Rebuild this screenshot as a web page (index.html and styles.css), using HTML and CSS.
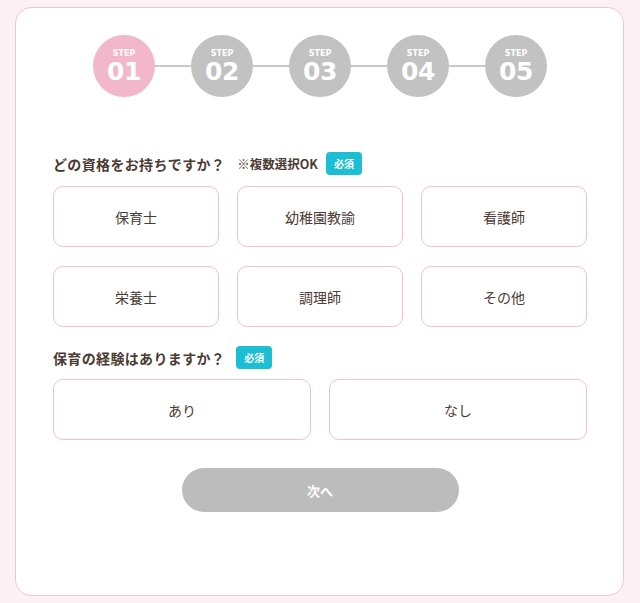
FILE: index.html
```html
<!DOCTYPE html>
<html lang="ja">
<head>
<meta charset="utf-8">
<title>STEP 01</title>
<link rel="stylesheet" href="styles.css">
</head>
<body>
<div class="card">
  <div class="steps">
    <div class="step active"><span class="step-label">STEP</span><span class="step-num">01</span></div>
    <div class="connector"></div>
    <div class="step"><span class="step-label">STEP</span><span class="step-num">02</span></div>
    <div class="connector"></div>
    <div class="step"><span class="step-label">STEP</span><span class="step-num">03</span></div>
    <div class="connector"></div>
    <div class="step"><span class="step-label">STEP</span><span class="step-num">04</span></div>
    <div class="connector"></div>
    <div class="step"><span class="step-label">STEP</span><span class="step-num">05</span></div>
  </div>

  <div class="question q1">
    <span class="q-title">どの資格をお持ちですか？</span>
    <span class="q-note">※複数選択OK</span>
    <span class="badge">必須</span>
  </div>
  <div class="options three">
    <button class="opt">保育士</button>
    <button class="opt">幼稚園教諭</button>
    <button class="opt">看護師</button>
    <button class="opt">栄養士</button>
    <button class="opt">調理師</button>
    <button class="opt">その他</button>
  </div>

  <div class="question q2">
    <span class="q-title">保育の経験はありますか？</span>
    <span class="badge">必須</span>
  </div>
  <div class="options two">
    <button class="opt">あり</button>
    <button class="opt">なし</button>
  </div>

  <div class="actions">
    <button class="next">次へ</button>
  </div>
</div>
</body>
</html>
```

FILE: styles.css
```css
* { box-sizing: border-box; }
html, body { margin: 0; padding: 0; }
body {
  background: #fef1f6;
  font-family: "Noto Sans CJK JP", "Noto Sans", sans-serif;
  color: #4b3b33;
  padding: 7px 16px 7px 15px;
}
.card {
  background: #ffffff;
  border: 1px solid #f6c3d4;
  border-radius: 16px;
  height: 589px;
  padding: 27px 36px 0 37px;
}
.steps {
  display: flex;
  justify-content: center;
  align-items: center;
}
.step {
  width: 62px;
  height: 62px;
  border-radius: 50%;
  background: #c2c2c2;
  color: #fff;
  display: flex;
  flex-direction: column;
  align-items: center;
  justify-content: center;
  gap: 1px;
  font-family: "DejaVu Sans", "Liberation Sans", sans-serif;
  font-weight: 700;
}
.step.active { background: #f2b7c9; }
.step-label {
  font-size: 8px;
  line-height: 1;
  margin-top: 2px;
}
.step-num {
  font-size: 25px;
  line-height: 1;
  letter-spacing: -0.5px;
}
.connector {
  width: 36px;
  height: 2px;
  background: #c9c9c9;
}
.question {
  display: flex;
  align-items: center;
  height: 23px;
}
.q1 { margin-top: 55px; }
.q2 { margin-top: 19px; }
.q-title {
  font-size: 14px;
  font-weight: 700;
  letter-spacing: 0.35px;
  color: #4b3b33;
}
.q-note {
  font-size: 12.5px;
  font-weight: 700;
  margin-left: 12px;
  color: #4b3b33;
}
.badge {
  background: #1bbed2;
  color: #fff;
  font-size: 10px;
  font-weight: 700;
  border-radius: 4px;
  height: 23px;
  line-height: 23px;
  padding: 0 8px;
  margin-left: 8px;
}
.q2 .badge { margin-left: 11px; }
.options {
  display: grid;
  margin-top: 10px;
}
.q1 + .options { margin-top: 11px; }
.options.three {
  grid-template-columns: repeat(3, 1fr);
  grid-auto-rows: 61px;
  column-gap: 18px;
  row-gap: 19px;
}
.options.two {
  grid-template-columns: repeat(2, 1fr);
  grid-auto-rows: 61px;
  column-gap: 18px;
}
.opt {
  background: #fff;
  border: 1px solid #f3bfd1;
  border-radius: 10px;
  font-family: "Noto Sans CJK JP", "Noto Sans", sans-serif;
  font-size: 14px;
  color: #4b3b33;
  padding: 0;
}
.actions {
  display: flex;
  justify-content: center;
  margin-top: 28px;
}
.next {
  width: 277px;
  height: 44px;
  border: none;
  border-radius: 22px;
  background: #bcbcbc;
  color: #fff;
  font-family: "Noto Sans CJK JP", "Noto Sans", sans-serif;
  font-size: 13px;
  font-weight: 700;
}
```
